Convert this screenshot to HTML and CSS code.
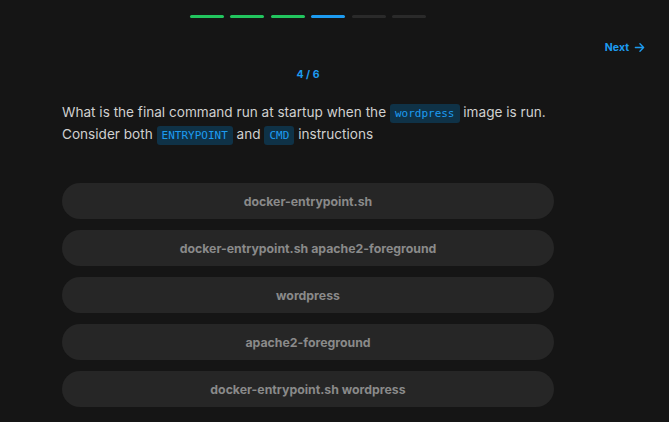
FILE: index.html
```html
<!DOCTYPE html>
<html>
<head>
<meta charset="utf-8">
<link rel="stylesheet" href="styles.css">
</head>
<body>
<div class="page">
  <div class="progress">
    <span class="seg done"></span>
    <span class="seg done"></span>
    <span class="seg done"></span>
    <span class="seg current"></span>
    <span class="seg"></span>
    <span class="seg"></span>
  </div>
  <div class="navrow">
    <a class="next">Next
      <svg width="11" height="11" viewBox="0 0 12 12" fill="none" stroke="currentColor" stroke-width="1.5" stroke-linecap="round" stroke-linejoin="round"><path d="M1.5 6h9M6.5 2l4 4-4 4"/></svg>
    </a>
  </div>
  <div class="content">
    <div class="counter">4 / 6</div>
    <p class="question">What is the final command run at startup when the <code>wordpress</code> image is run. Consider both <code>ENTRYPOINT</code> and <code>CMD</code> instructions</p>
    <div class="options">
      <button class="option">docker-entrypoint.sh</button>
      <button class="option">docker-entrypoint.sh apache2-foreground</button>
      <button class="option">wordpress</button>
      <button class="option">apache2-foreground</button>
      <button class="option">docker-entrypoint.sh wordpress</button>
    </div>
  </div>
</div>
</body>
</html>
```
FILE: styles.css
```css
html, body {
  margin: 0;
  padding: 0;
  background: #151515;
  height: 100%;
  overflow: hidden;
}
body {
  font-family: Inter, "Noto Sans", sans-serif;
}
.page {
  width: 669px;
  display: flex;
  flex-direction: column;
}
.progress {
  display: flex;
  gap: 6.4px;
  padding-top: 15px;
  margin-left: 190px;
}
.seg {
  width: 34px;
  height: 3px;
  border-radius: 2px;
  background: #2a2a2a;
}
.seg.done { background: #22c55e; }
.seg.current { background: #1d9bf0; }
.navrow {
  display: flex;
  justify-content: flex-end;
  padding-right: 24px;
  margin-top: 22px;
  height: 14px;
}
.next {
  display: flex;
  align-items: center;
  gap: 5px;
  color: #1d9bf0;
  font-size: 10.5px;
  font-weight: 700;
}
.content {
  margin-left: 62px;
  width: 492px;
  display: flex;
  flex-direction: column;
}
.counter {
  text-align: center;
  color: #1d9bf0;
  font-size: 10.5px;
  font-weight: 700;
  margin-top: 14px;
  line-height: 14px;
}
.question {
  margin: 20px 0 0;
  color: #d0d0d0;
  font-size: 13.6px;
  line-height: 21.5px;
}
code {
  font-family: "DejaVu Sans Mono", "Liberation Mono", monospace;
  font-size: 11px;
  line-height: 1;
  color: #1d9bf0;
  background: #0f3247;
  padding: 3px 5px;
  border-radius: 3px;
}
.options {
  display: flex;
  flex-direction: column;
  gap: 11px;
  margin-top: 38px;
}
.option {
  height: 36px;
  border: none;
  border-radius: 18px;
  background: #262626;
  color: #8a8a8a;
  font-family: Inter, "Noto Sans", sans-serif;
  font-size: 12.3px;
  font-weight: 700;
  text-align: center;
  padding: 0;
}
```
